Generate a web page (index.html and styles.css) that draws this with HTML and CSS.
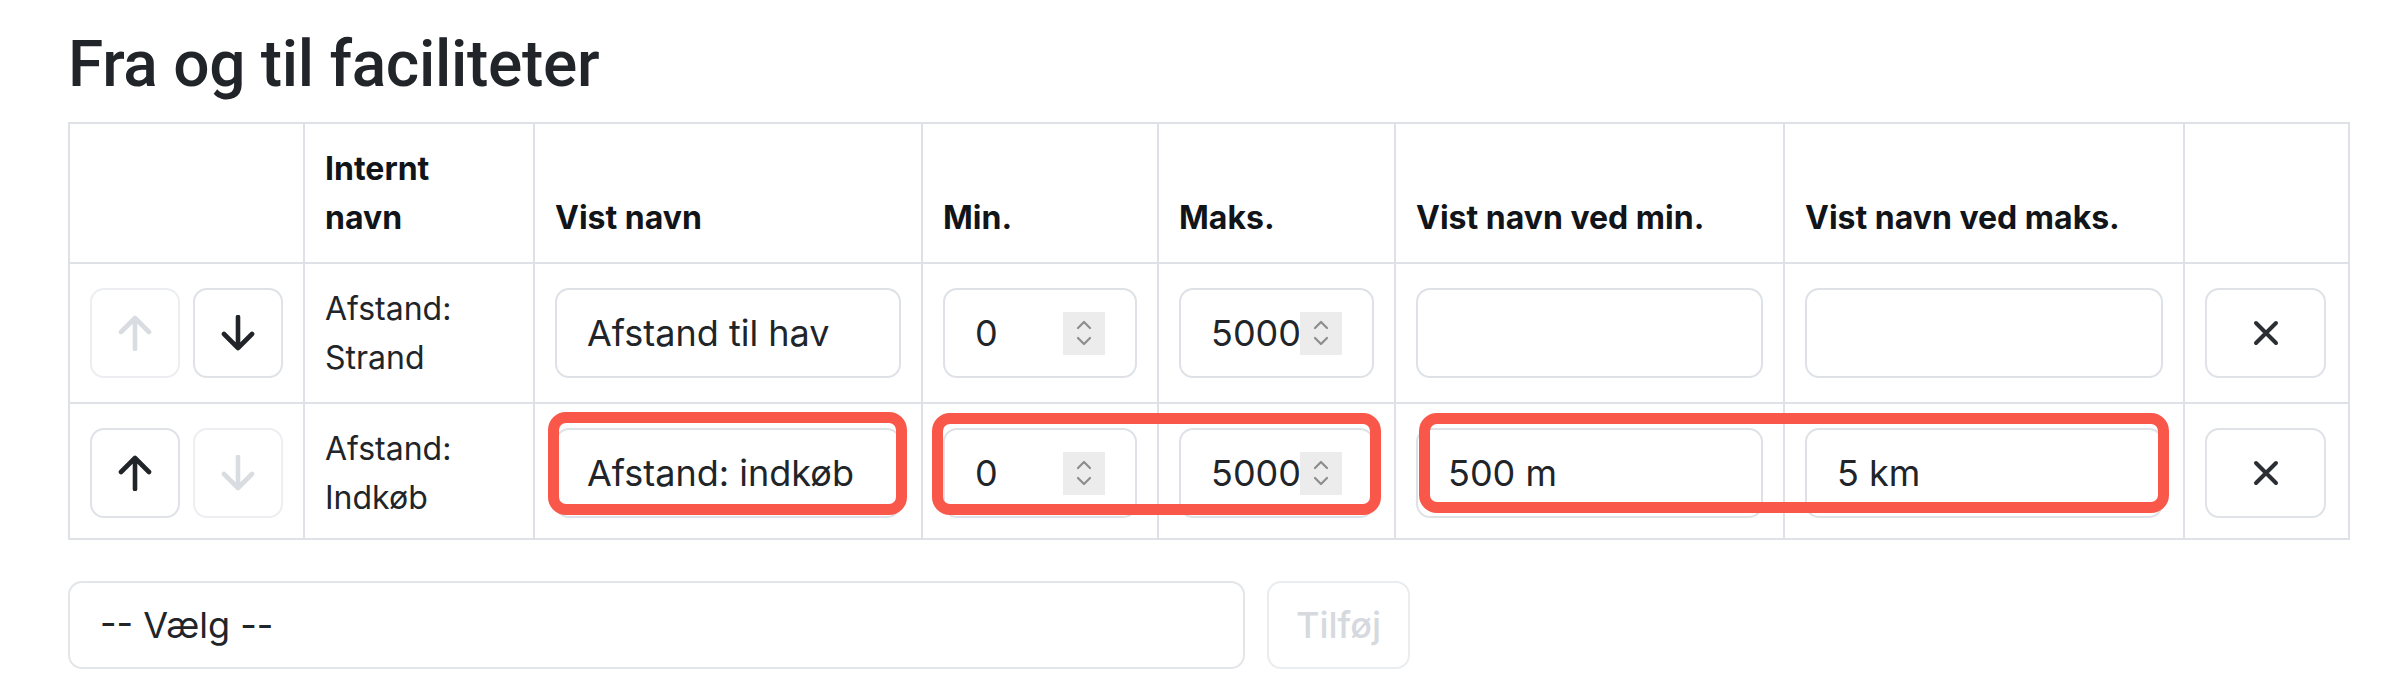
FILE: index.html
```html
<!DOCTYPE html>
<html lang="da">
<head>
<meta charset="utf-8">
<title>Fra og til faciliteter</title>
<link rel="stylesheet" href="styles.css">
</head>
<body>
<main class="page">
  <h2 class="title">Fra og til faciliteter</h2>
  <table class="fac-table">
    <colgroup>
      <col class="c-move"><col class="c-intern"><col class="c-name"><col class="c-min"><col class="c-max"><col class="c-lmin"><col class="c-lmax"><col class="c-del">
    </colgroup>
    <thead>
      <tr>
        <th></th>
        <th>Internt<br>navn</th>
        <th>Vist navn</th>
        <th>Min.</th>
        <th>Maks.</th>
        <th>Vist navn ved min.</th>
        <th>Vist navn ved maks.</th>
        <th></th>
      </tr>
    </thead>
    <tbody>
      <tr>
        <td>
          <div class="move">
            <button class="icon-btn" disabled><svg class="arrow" viewBox="0 0 34 36"><path d="M17 34V3M3 17L17 3L31 17"/></svg></button>
            <button class="icon-btn"><svg class="arrow" viewBox="0 0 34 36"><path d="M17 2V33M3 19L17 33L31 19"/></svg></button>
          </div>
        </td>
        <td>Afstand:<br>Strand</td>
        <td><input class="field" type="text" value="Afstand til hav"></td>
        <td><div class="num-field"><input type="text" value="0"><span class="spin"><svg viewBox="0 0 16 28"><path d="M2 9L8 3L14 9M2 19L8 25L14 19"/></svg></span></div></td>
        <td><div class="num-field"><input type="text" value="5000"><span class="spin"><svg viewBox="0 0 16 28"><path d="M2 9L8 3L14 9M2 19L8 25L14 19"/></svg></span></div></td>
        <td><input class="field" type="text" value=""></td>
        <td><input class="field" type="text" value=""></td>
        <td><button class="del-btn"><svg class="cross" viewBox="0 0 26 26"><path d="M3 3L23 23M23 3L3 23"/></svg></button></td>
      </tr>
      <tr class="last">
        <td>
          <div class="move">
            <button class="icon-btn"><svg class="arrow" viewBox="0 0 34 36"><path d="M17 34V3M3 17L17 3L31 17"/></svg></button>
            <button class="icon-btn" disabled><svg class="arrow" viewBox="0 0 34 36"><path d="M17 2V33M3 19L17 33L31 19"/></svg></button>
          </div>
        </td>
        <td>Afstand:<br>Indkøb</td>
        <td><input class="field" type="text" value="Afstand: indkøb"></td>
        <td><div class="num-field"><input type="text" value="0"><span class="spin"><svg viewBox="0 0 16 28"><path d="M2 9L8 3L14 9M2 19L8 25L14 19"/></svg></span></div></td>
        <td><div class="num-field"><input type="text" value="5000"><span class="spin"><svg viewBox="0 0 16 28"><path d="M2 9L8 3L14 9M2 19L8 25L14 19"/></svg></span></div></td>
        <td><input class="field" type="text" value="500 m"></td>
        <td><input class="field" type="text" value="5 km"></td>
        <td><button class="del-btn"><svg class="cross" viewBox="0 0 26 26"><path d="M3 3L23 23M23 3L3 23"/></svg></button></td>
      </tr>
    </tbody>
  </table>

  <div class="add-row">
    <div class="select">-- Vælg --</div>
    <button class="add-btn" disabled>Tilføj</button>
  </div>

  <div class="mark mark-name"></div>
  <div class="mark mark-range"></div>
  <div class="mark mark-labels"></div>
</main>
</body>
</html>
```

FILE: styles.css
```css
html, body {
  margin: 0;
  background: #ffffff;
}

body {
  font-family: Inter, "Liberation Sans", sans-serif;
  color: #212529;
}

.page {
  position: relative;
  padding: 26px 0 0 68px;
  min-height: 670px;
}

.title {
  font-family: Roboto, Inter, sans-serif;
  font-weight: 500;
  font-size: 64px;
  line-height: 77px;
  letter-spacing: -0.3px;
  margin: 0 0 19px;
  color: #212529;
}

.fac-table {
  width: 2282px;
  table-layout: fixed;
  border-collapse: separate;
  border-spacing: 0;
  border-top: 2px solid #dee2e6;
  border-left: 2px solid #dee2e6;
  font-size: 32px;
  line-height: 49px;
}

.c-move { width: 235px; }
.c-intern { width: 230px; }
.c-name { width: 388px; }
.c-min { width: 236px; }
.c-max { width: 237px; }
.c-lmin { width: 389px; }
.c-lmax { width: 400px; }
.c-del { width: 165px; }

.fac-table th,
.fac-table td {
  border-right: 2px solid #dee2e6;
  border-bottom: 2px solid #dee2e6;
  padding: 20px;
  text-align: left;
  vertical-align: middle;
}

.fac-table th {
  vertical-align: bottom;
  font-weight: 700;
  color: #111418;
}

.fac-table tr.last td {
  padding-bottom: 16px;
}

.move {
  display: flex;
  gap: 13px;
}

.icon-btn,
.del-btn {
  display: flex;
  align-items: center;
  justify-content: center;
  height: 90px;
  padding: 0;
  background: #fff;
  border: 2px solid #dfe2e6;
  border-radius: 14px;
  color: #212529;
}

.icon-btn {
  width: 90px;
}

.del-btn {
  width: 121px;
}

.icon-btn:disabled {
  border-color: #eceef1;
  color: #d9dce0;
}

.arrow {
  width: 34px;
  height: 36px;
  fill: none;
  stroke: currentColor;
  stroke-width: 4.6;
  stroke-linecap: round;
  stroke-linejoin: round;
}

.cross {
  width: 26px;
  height: 26px;
  fill: none;
  stroke: #2b2f33;
  stroke-width: 4;
  stroke-linecap: round;
}

.field,
.num-field {
  box-sizing: border-box;
  width: 100%;
  height: 90px;
  border: 2px solid #dee2e6;
  border-radius: 14px;
  background: #fff;
  font-family: Inter, "Liberation Sans", sans-serif;
  font-size: 36px;
  color: #212529;
}

.field {
  display: block;
  padding: 0 30px;
  outline: none;
}

.num-field {
  display: flex;
  align-items: center;
  padding: 0 30px;
}

.num-field input {
  flex: 1 1 auto;
  min-width: 0;
  width: 10px;
  border: 0;
  padding: 0;
  margin: 0;
  outline: none;
  background: transparent;
  font-family: inherit;
  font-size: 36px;
  color: #212529;
}

.spin {
  flex: none;
  display: flex;
  align-items: center;
  justify-content: center;
  width: 42px;
  height: 43px;
  background: #ececec;
}

.spin svg {
  width: 16px;
  height: 28px;
  fill: none;
  stroke: #8d8d8d;
  stroke-width: 2.2;
  stroke-linecap: round;
  stroke-linejoin: round;
}

.add-row {
  display: flex;
  gap: 22px;
  margin-top: 41px;
}

.select {
  box-sizing: border-box;
  width: 1177px;
  height: 88px;
  display: flex;
  align-items: center;
  padding: 0 30px;
  border: 2px solid #e3e6e9;
  border-radius: 14px;
  font-size: 36px;
  color: #212529;
}

.add-btn {
  box-sizing: border-box;
  width: 143px;
  height: 88px;
  border: 2px solid #eaedf0;
  border-radius: 14px;
  background: #fff;
  font-family: Inter, "Liberation Sans", sans-serif;
  font-size: 36px;
  font-weight: 500;
  color: #d6d9dd;
  padding: 0;
}

.mark {
  position: absolute;
  box-sizing: border-box;
  border: 11px solid #fa574b;
  border-radius: 18px;
  pointer-events: none;
}

.mark-name {
  left: 548px;
  top: 412px;
  width: 359px;
  height: 103px;
}

.mark-range {
  left: 932px;
  top: 413px;
  width: 449px;
  height: 102px;
}

.mark-labels {
  left: 1419px;
  top: 413px;
  width: 750px;
  height: 100px;
}
```
